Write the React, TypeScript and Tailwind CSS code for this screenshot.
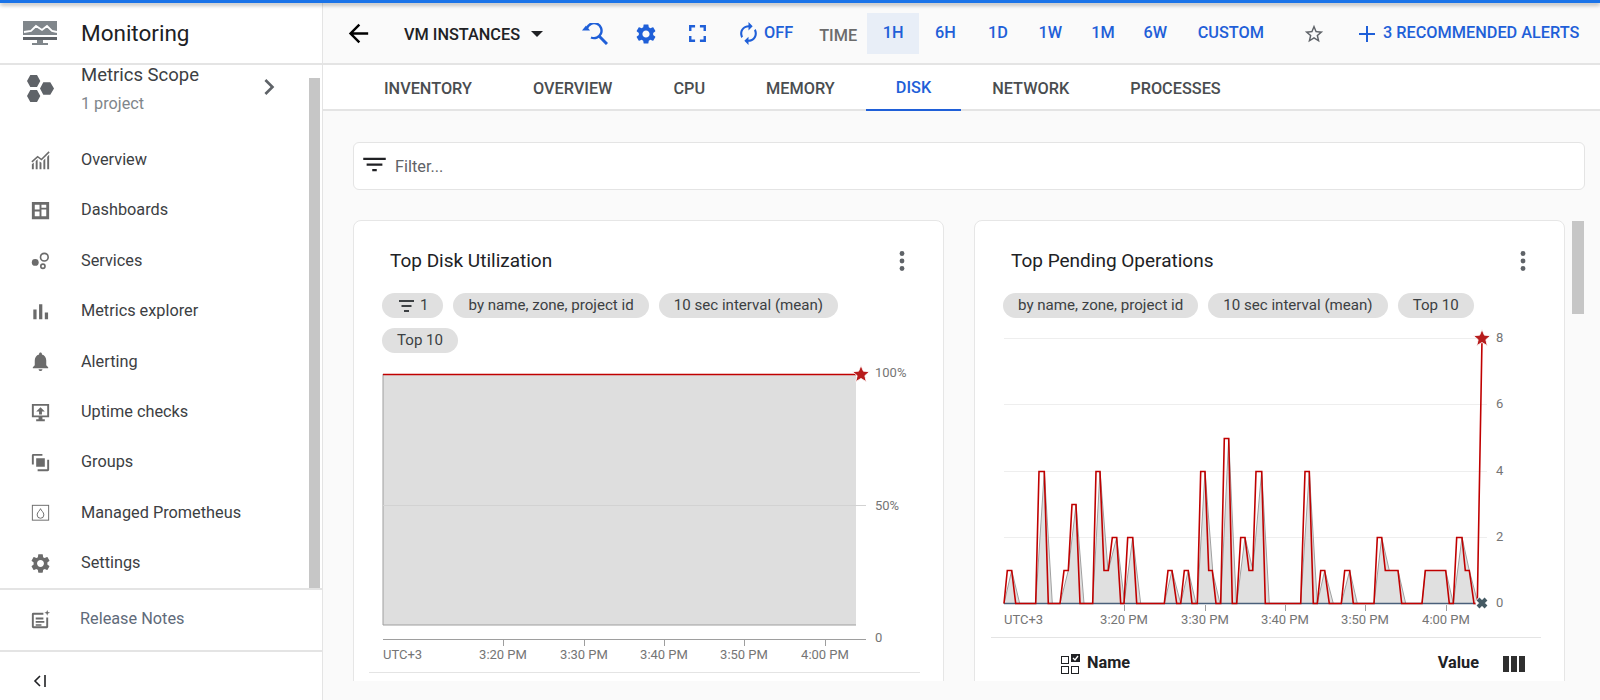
import type { ReactNode } from "react";

const gear = "M19.14 12.94c.04-.3.06-.61.06-.94 0-.32-.02-.64-.07-.94l2.03-1.58c.18-.14.23-.41.12-.61l-1.92-3.32c-.12-.22-.37-.29-.59-.22l-2.39.96c-.5-.38-1.03-.7-1.62-.94l-.36-2.54c-.04-.24-.24-.41-.48-.41h-3.84c-.24 0-.43.17-.47.41l-.36 2.54c-.59.24-1.13.57-1.62.94l-2.39-.96c-.22-.08-.47 0-.59.22L2.74 8.87c-.12.21-.08.47.12.61l2.03 1.58c-.05.3-.09.63-.09.94s.02.64.07.94l-2.03 1.58c-.18.14-.23.41-.12.61l1.92 3.32c.12.22.37.29.59.22l2.39-.96c.5.38 1.03.7 1.62.94l.36 2.54c.05.24.24.41.48.41h3.84c.24 0 .44-.17.47-.41l.36-2.54c.59-.24 1.13-.56 1.62-.94l2.39.96c.22.08.47 0 .59-.22l1.92-3.32c.12-.22.07-.47-.12-.61l-2.01-1.58zM12 15.6c-1.98 0-3.6-1.62-3.6-3.6s1.62-3.6 3.6-3.6 3.6 1.62 3.6 3.6-1.62 3.6-3.6 3.6z";

const Icon = ({ size = 24, className = "", children }: { size?: number; className?: string; children: ReactNode }) => (
    <svg width={size} height={size} viewBox="0 0 24 24" fill="currentColor" className={`shrink-0 ${className}`}>
        {children}
    </svg>
);

const navIcons: Record<string, ReactNode> = {
    Overview: (
        <>
            <path d="M3 13.5 9 8l4 3 8-8" fill="none" stroke="currentColor" strokeWidth="1.6" />
            <path d="M3 16l2-2v7H3zM7 12.5l2-1.8V21H7zM11 13l2 1.4V21h-2zM15 12l2-2v11h-2zM19 8l2-2v15h-2z" />
        </>
    ),
    Dashboards: <path fillRule="evenodd" d="M3 3h18v18H3zM6 6v5h5V6zm7 0v3h5V6zm0 5v7h5v-7zm-7 2v5h5v-5z" />,
    Services: (
        <>
            <circle cx="6.5" cy="14" r="3.6" />
            <circle cx="16" cy="8.5" r="4" fill="none" stroke="currentColor" strokeWidth="1.7" />
            <circle cx="14.5" cy="18" r="2.2" fill="none" stroke="currentColor" strokeWidth="1.7" />
        </>
    ),
    "Metrics explorer": <path d="M4.5 10h3.4v10H4.5zM10.5 4.5h3.4V20h-3.4zM16.5 13h3.4v7h-3.4z" />,
    Alerting: <path d="M12 22c1.1 0 2-.9 2-2h-4c0 1.1.89 2 2 2zm6-6v-5c0-3.07-1.64-5.64-4.5-6.32V4c0-.83-.67-1.5-1.5-1.5s-1.5.67-1.5 1.5v.68C7.63 5.36 6 7.92 6 11v5l-2 2v1h16v-1l-2-2z" />,
    "Uptime checks": (
        <path fillRule="evenodd" d="M3 3h18v14h-7v2h2.5v2h-9v-2H10v-2H3zM5 5v10h14V5zm7 1.5 4.5 4.5h-3v3h-3v-3h-3z" />
    ),
    Groups: (
        <path fillRule="evenodd" d="M3 4.5A1.5 1.5 0 0 1 4.500 3H14v2H5v9H3zM7.500 7.500h9v9h-9zM21 9v10.500A1.500 1.500 0 0 1 19.500 21H9v-2h10V9z" />
    ),
    "Managed Prometheus": (
        <>
            <rect x="3.500" y="4.500" width="17" height="15.500" fill="none" stroke="currentColor" strokeWidth="1" />
            <path d="M12 8c.5 2 3.500 3.500 3.500 6.500a3.500 3.500 0 0 1-7 0C8.500 11.500 11.500 10 12 8z" fill="none" stroke="currentColor" strokeWidth="1" />
        </>
    ),
    Settings: <path d={gear} />,
};

const navItems = Object.keys(navIcons);

const Sidebar = () => (
    <aside className="w-[323px] shrink-0 h-full flex flex-col bg-white border-r border-[#e4e4e4] font-['Roboto',sans-serif]">
        <div className="h-[62px] shrink-0 flex items-center border-b-2 border-[#e4e4e4] pl-[23px]">
            <svg width="35" height="24" viewBox="0 0 35 24" className="shrink-0">
                <path d="M0 0h34v14H0z" fill="#80868b" />
                <path d="M0 16h34v3H0z" fill="#5f6368" />
                <path d="M14 19h6v3h5v2H9v-2h5z" fill="#80868b" />
                <path d="M1 11l7-1 5-5 6 4 5-4 5 5 5 1" fill="none" stroke="#fff" strokeWidth="1.800" />
            </svg>
            <span className="ml-[23px] text-[22.500px] leading-none text-[#202124]">Monitoring</span>
        </div>
        <div className="relative flex-1 min-h-0 overflow-hidden">
            <div className="h-[70px] flex items-start pl-[27px]">
                <svg width="28" height="29" viewBox="0 0 28 29" className="mt-[9px] shrink-0">
                    <path d="M0 7l3.300-6h6.700l3.300 6-3.300 6H3.300zM13 14.500l3.300-6.300h7l3.700 6.300-3.700 6.300h-7zM0 22l3.300-6h6.700l3.300 6-3.300 6H3.300z" fill="#5f6368" />
                </svg>
                <div className="ml-[26px] w-[172px]">
                    <div className="text-[18.500px] leading-[20px] text-[#3c4043]">Metrics Scope</div>
                    <div className="text-[16.200px] leading-[20px] mt-[9px] text-[#80868b]">1 project</div>
                </div>
                <Icon size={32} className="text-[#5f6368] mt-[6px]">
                    <path d="M10 6L8.590 7.410 13.170 12l-4.580 4.590L10 18l6-6z" />
                </Icon>
            </div>
            <nav>
                {navItems.map((item) => (
                    <div key={item} className="h-[50.400px] flex items-center pl-[29px] text-[16.300px] text-[#3c4043]">
                        <Icon size={23} className="text-[#6b6b6b]">{navIcons[item]}</Icon>
                        <span className="ml-[29px]">{item}</span>
                    </div>
                ))}
            </nav>
            <div className="absolute left-[309px] right-[2px] top-[13px] bottom-0 bg-[#c6c6c6]" />
        </div>
        <div className="h-[62px] shrink-0 flex items-center border-t-2 border-[#e4e4e4] pl-[29px] pb-[2px] text-[16.300px] text-[#5f6b7a]">
            <Icon size={23} className="text-[#6b6b6b]">
                <path fillRule="evenodd" d="M3 6.500A1.500 1.500 0 0 1 4.500 5H15v2H5v12h13v-9h2v9.500a1.500 1.500 0 0 1-1.500 1.500h-14A1.500 1.500 0 0 1 3 19.500zM7 10h8v2H7zm0 3.500h9v2H7zM7 17h6v1.500H7zM19 2l.8 2.200L22 5l-2.200.8L19 8l-.8-2.200L16 5l2.200-.8z" />
            </Icon>
            <span className="ml-[28px]">Release Notes</span>
        </div>
        <div className="h-[50px] shrink-0 flex items-center border-t-2 border-[#e4e4e4] pl-[33px]">
            <svg width="14" height="12" viewBox="0 0 14 12" className="mt-[10px]">
                <path d="M7 1 2 6l5 5" fill="none" stroke="#202124" strokeWidth="1.600" />
                <path d="M12 0v12" stroke="#202124" strokeWidth="1.600" />
            </svg>
        </div>
    </aside>
);

const TopBar = () => (
    <div className="h-[62px] shrink-0 flex items-center pt-[1px] border-b-2 border-[#e4e4e4] bg-[#fafafa] text-[#1f5fd8] font-['Roboto',sans-serif] text-[16.300px] font-medium">
        <Icon size={29} className="ml-[21px] text-black">
            <path d="M20 11H7.830l5.590-5.590L12 4l-8 8 8 8 1.410-1.410L7.830 13H20v-2z" />
        </Icon>
        <span className="ml-[31px] text-[#202124] leading-none mt-[3px]">VM INSTANCES</span>
        <svg width="12" height="6" viewBox="0 0 12 6" className="ml-[11px]">
            <path d="M0 0h12L6 6z" fill="#202124" />
        </svg>
        <svg width="26" height="22" viewBox="0 0 26 22" className="ml-[39px] shrink-0" fill="none" stroke="currentColor" strokeWidth="2.400">
            <path d="M5 5A7.500 7.500 0 1 1 9 14.500" />
            <path d="M17 13l8 8" strokeWidth="3" />
            <path d="M0 7.500h8l-4-5z" fill="currentColor" stroke="none" />
        </svg>
        <Icon size={24} className="ml-[26px]"><path d={gear} /></Icon>
        <Icon size={29} className="ml-[25px]">
            <path d="M7 14H5v5h5v-2H7v-3zm-2-4h2V7h3V5H5v5zm12 7h-3v2h5v-5h-2v3zM14 5v2h3v3h2V5h-5z" />
        </Icon>
        <Icon size={25} className="ml-[24px]">
            <path d="M12 6v3l4-4-4-4v3c-4.420 0-8 3.580-8 8 0 1.570.46 3.030 1.240 4.260L6.700 14.800c-.45-.83-.7-1.790-.7-2.800 0-3.310 2.690-6 6-6zm6.760 1.740L17.300 9.200c.44.84.7 1.790.7 2.800 0 3.310-2.690 6-6 6v-3l-4 4 4 4v-3c4.420 0 8-3.580 8-8 0-1.570-.46-3.030-1.240-4.260z" />
        </Icon>
        <span className="ml-[3px] leading-none">OFF</span>
        <span className="ml-[26px] text-[#6b6b6b] leading-none mt-[5px]">TIME</span>
        <div className="ml-[10px] flex items-center mt-[-1px]">
            <div className="w-[52px] h-[41px] flex items-center justify-center bg-[#e8eef7]">1H</div>
            {["6H", "1D", "1W", "1M", "6W"].map((r) => (
                <div key={r} className="w-[52.500px] h-[41px] flex items-center justify-center">{r}</div>
            ))}
        </div>
        <span className="ml-[16px]">CUSTOM</span>
        <Icon size={22} className="ml-[39px] text-[#5f6368]">
            <path d="M22 9.240l-7.190-.62L12 2 9.190 8.630 2 9.240l5.460 4.730L5.820 21 12 17.270 18.180 21l-1.630-7.030L22 9.240zM12 15.400l-3.760 2.270 1-4.280-3.320-2.880 4.380-.38L12 6.100l1.710 4.040 4.380.38-3.320 2.880 1 4.280L12 15.400z" />
        </Icon>
        <Icon size={24} className="ml-[30px]">
            <path d="M20 13h-7v7h-2v-7H4v-2h7V4h2v7h7v2z" />
        </Icon>
        <span className="ml-[4px] whitespace-nowrap">3 RECOMMENDED ALERTS</span>
    </div>
);

const tabs = ["INVENTORY", "OVERVIEW", "CPU", "MEMORY", "DISK", "NETWORK", "PROCESSES"];

const Tabs = () => (
    <div className="h-[46px] shrink-0 flex pl-[31px] gap-px bg-white border-b-2 border-[#e4e4e4] font-['Roboto',sans-serif] text-[16.300px] font-medium text-[#4a4d50]">
        {tabs.map((t) => (
            <div
                key={t}
                className={`px-[30px] h-[46px] pt-[2px] flex items-center ${t === "DISK" ? "text-[#1f5fd8] border-b-2 border-[#1f5fd8]" : ""}`}
            >
                {t}
            </div>
        ))}
    </div>
);

const Chip = ({ children }: { children: ReactNode }) => (
    <div className="h-[25px] px-[15px] flex items-center rounded-full bg-[#e0e0e0] text-[15.100px] text-[#3c4043] whitespace-nowrap">
        {children}
    </div>
);

const Kebab = () => (
    <Icon size={24} className="text-[#5f6368]">
        <circle cx="12" cy="4.500" r="2.400" />
        <circle cx="12" cy="12" r="2.400" />
        <circle cx="12" cy="19.500" r="2.400" />
    </Icon>
);

const Card = ({ title, chips, children }: { title: string; chips: ReactNode; children: ReactNode }) => (
    <div className="w-[591px] h-[520px] shrink-0 rounded-lg bg-white border border-[#e6e6e6]">
        <div className="mt-[28px] h-[24px] flex items-center justify-between pl-[36px] pr-[29px] text-[19px] text-[#202124]">
            <span className="mt-[1px]">{title}</span>
            <Kebab />
        </div>
        <div className="mt-[20px] pl-[28px] pr-[80px] flex flex-wrap gap-x-[10px] gap-y-[10px]">{chips}</div>
        {children}
    </div>
);

const Star = ({ x, y }: { x: number; y: number }) => (
    <path
        transform={`translate(${x - 10.2} ${y - 10.2}) scale(0.85)`}
        d="M12 17.270L18.180 21l-1.640-7.030L22 9.240l-7.190-.61L12 2 9.190 8.630 2 9.240l5.460 4.730L5.820 21z"
        fill="#b71c1c"
        stroke="#fff"
        strokeWidth="1"
    />
);

const labelClass = "fill-[#757575] text-[13px]";

const DiskChart = () => (
    <svg width="589" height="312" viewBox="354 360 589 312" className="block mt-[7px] font-['Roboto',sans-serif]">
        <rect x="383" y="374" width="473" height="251" fill="#dedede" />
        <path d="M383 374v251h473" fill="none" stroke="#9e9e9e" strokeWidth="1" />
        <path d="M383 505.500h483" stroke="#d2d2d2" />
        <path d="M383 374.500h473" stroke="#c00000" strokeWidth="1.300" />
        <Star x={861} y={374} />
        <text x="875" y="377" className={labelClass}>100%</text>
        <text x="875" y="510" className={labelClass}>50%</text>
        <text x="875" y="642" className={labelClass}>0</text>
        <path d="M383 639.500h483" stroke="#9e9e9e" />
        {[503, 584, 664, 744, 825].map((x, i) => (
            <g key={x}>
                <path d={`M${x}.5 640v6`} stroke="#9e9e9e" />
                <text x={x} y="659" textAnchor="middle" className={labelClass}>
                    {["3:20 PM", "3:30 PM", "3:40 PM", "3:50 PM", "4:00 PM"][i]}
                </text>
            </g>
        ))}
        <text x="383" y="659" className={labelClass}>UTC+3</text>
    </svg>
);

// [x, value] for the red series, read off the picture
const series: [number, number][] = [
    [1004, 0], [1007.3, 1], [1011.7, 1], [1015.7, 0], [1035.7, 0], [1039, 4], [1044.3, 4], [1048.3, 0], [1060, 0],
    [1064, 1], [1068.3, 1], [1072, 3], [1076, 3], [1080, 0], [1092.7, 0], [1096, 4], [1100, 4], [1104, 1], [1108.3, 1],
    [1112.3, 2], [1116.7, 2], [1120.7, 0], [1124, 0], [1127.7, 2], [1132.7, 2], [1136.7, 0], [1164.3, 0], [1168, 1],
    [1172, 1], [1176.7, 0], [1180.7, 0], [1184.3, 1], [1188.3, 1], [1192, 0], [1197.3, 0], [1200.7, 4], [1205, 4],
    [1208.7, 1], [1212.3, 1], [1216, 0], [1220.7, 0], [1224.3, 5], [1228.7, 5], [1232.3, 0], [1236.7, 0], [1240.7, 2],
    [1245, 2], [1249, 1], [1252.7, 1], [1256, 4], [1261.7, 4], [1265.3, 0], [1300.7, 0], [1305, 4], [1309.3, 4],
    [1313.3, 0], [1317.3, 0], [1320.7, 1], [1324.7, 1], [1329.3, 0], [1341.3, 0], [1344.7, 1], [1349.7, 1], [1353.3, 0],
    [1374, 0], [1377.3, 2], [1381.7, 2], [1385.3, 1], [1398, 1], [1401.7, 0], [1422, 0], [1425.3, 1], [1445.7, 1],
    [1449.3, 0], [1453.3, 0], [1456.7, 2], [1462, 2], [1465.3, 1], [1469.3, 1], [1474, 0], [1477.3, 0], [1482, 8],
];

const py = (v: number) => 603.5 - v * 33;
const line = (pts: [number, number][]) => pts.map(([x, v], i) => `${i ? "L" : "M"}${x} ${py(v)}`).join(" ");

// grey series lags the red one by a sample, so short flat tops collapse into points
const lagged = series
    .slice(0, -1)
    .filter(([x, v], i) => !(i > 0 && v > series[i - 1][1] && series[i + 1][1] === v && series[i + 1][0] - x < 8))
    .map(([x, v], i, arr): [number, number] => [i > 0 && v < arr[i - 1][1] ? x + 4 : x, v]);

const PendingChart = () => (
    <svg width="589" height="312" viewBox="975 325 589 312" className="block mt-[7px] font-['Roboto',sans-serif]">
        {[338, 404, 471, 537].map((y) => (
            <path key={y} d={`M1004 ${y}.5h483`} stroke="#eeeeee" strokeWidth="1" />
        ))}
        <path d={`${line(lagged)} L1478 603.5 Z`} fill="#e0e0e0" />
        <path d={line(lagged)} fill="none" stroke="#a0a0a0" strokeWidth="1" />
        <path d="M1004 603.5h473" stroke="#4a5f7a" strokeWidth="1.500" />
        <path d={line(series)} fill="none" stroke="#c00000" strokeWidth="1.600" />
        <Star x={1482} y={338} />
        <g transform="translate(1482 603)">
            <circle r="6.500" fill="#fff" />
            <path d="M-4 -4 4 4M4 -4-4 4" stroke="#455a64" strokeWidth="4" />
        </g>
        {[["8", 342], ["6", 408], ["4", 475], ["2", 541], ["0", 607]].map(([t, y]) => (
            <text key={t} x="1496" y={y} className={labelClass}>{t}</text>
        ))}
        {[1124, 1205, 1285, 1365, 1446].map((x, i) => (
            <g key={x}>
                <path d={`M${x}.5 605v6`} stroke="#9e9e9e" />
                <text x={x} y="624" textAnchor="middle" className={labelClass}>
                    {["3:20 PM", "3:30 PM", "3:40 PM", "3:50 PM", "4:00 PM"][i]}
                </text>
            </g>
        ))}
        <text x="1004" y="624" className={labelClass}>UTC+3</text>
    </svg>
);

const SelectIcon = () => (
    <svg width="19" height="20" viewBox="0 0 19 20" className="shrink-0">
        <rect x="0.500" y="2.500" width="7" height="7" fill="none" stroke="#202124" />
        <rect x="0.500" y="12.500" width="7" height="7" fill="none" stroke="#202124" />
        <rect x="10.500" y="12.500" width="7" height="7" fill="none" stroke="#202124" />
        <rect x="10" y="0" width="9" height="8" fill="#202124" />
        <path d="M12 4l2 2 3-4" fill="none" stroke="#fff" strokeWidth="1.300" />
    </svg>
);

const ColumnsIcon = () => (
    <svg width="22" height="16" viewBox="0 0 22 16" className="shrink-0">
        <path d="M0 0h6v16H0zM8 0h6v16H8zM16 0h6v16h-6z" fill="#2f2f2f" />
    </svg>
);

export default function App() {
    return (
        <div className="relative w-[1600px] h-[700px] overflow-hidden bg-[#fafafa] flex font-['Roboto',sans-serif]">
            <div className="absolute top-0 inset-x-0 h-[3px] bg-[#1a73e8] shadow-[0_2px_4px_rgba(0,0,0,0.35)] z-10" />
            <div className="w-full h-full pt-[3px] flex">
                <Sidebar />
                <main className="relative flex-1 min-w-0 flex flex-col">
                    <TopBar />
                    <Tabs />
                    <div className="h-[48px] shrink-0 mt-[31px] ml-[30px] mr-[15px] flex items-center rounded-md bg-white border border-[#e4e4e4] pl-[7px] pt-[2px] text-[16.300px] text-[#5f6368]">
                        <Icon size={27} className="text-[#202124] mt-[-5px]">
                            <path d="M10 18h4v-2h-4v2zM2 6v2h20V6H2zm3 7h14v-2H5v2z" />
                        </Icon>
                        <span className="ml-[7px]">Filter...</span>
                    </div>
                    <div className="mt-[30px] ml-[30px] h-[461px] overflow-hidden flex gap-[30px]">
                        <Card
                            title="Top Disk Utilization"
                            chips={
                                <>
                                    <Chip>
                                        <svg width="15" height="12" viewBox="0 0 15 12" className="ml-[2px] mr-[6px]">
                                            <path d="M0 0h15v2H0zM2.500 5h10v2h-10zM5 10h5v2H5z" fill="#3c4043" />
                                        </svg>
                                        1
                                    </Chip>
                                    <Chip>by name, zone, project id</Chip>
                                    <Chip>10 sec interval (mean)</Chip>
                                    <Chip>Top 10</Chip>
                                </>
                            }
                        >
                            <DiskChart />
                            <div className="ml-[15px] mr-[23px] border-t border-[#e4e4e4]" />
                        </Card>
                        <Card
                            title="Top Pending Operations"
                            chips={
                                <>
                                    <Chip>by name, zone, project id</Chip>
                                    <Chip>10 sec interval (mean)</Chip>
                                    <Chip>Top 10</Chip>
                                </>
                            }
                        >
                            <PendingChart />
                            <div className="ml-[16px] mr-[23px] border-t border-[#e4e4e4] h-[48px] pt-[4px] flex items-center pl-[70px] pr-[16px] text-[16.300px] font-bold text-[#202124]">
                                <SelectIcon />
                                <span className="ml-[7px]">Name</span>
                                <span className="ml-auto">Value</span>
                                <span className="ml-[24px]"><ColumnsIcon /></span>
                            </div>
                        </Card>
                    </div>
                    <div className="absolute left-[1249px] w-[12px] top-[218px] h-[93px] bg-[#c6c6c6]" />
                </main>
            </div>
        </div>
    );
}
